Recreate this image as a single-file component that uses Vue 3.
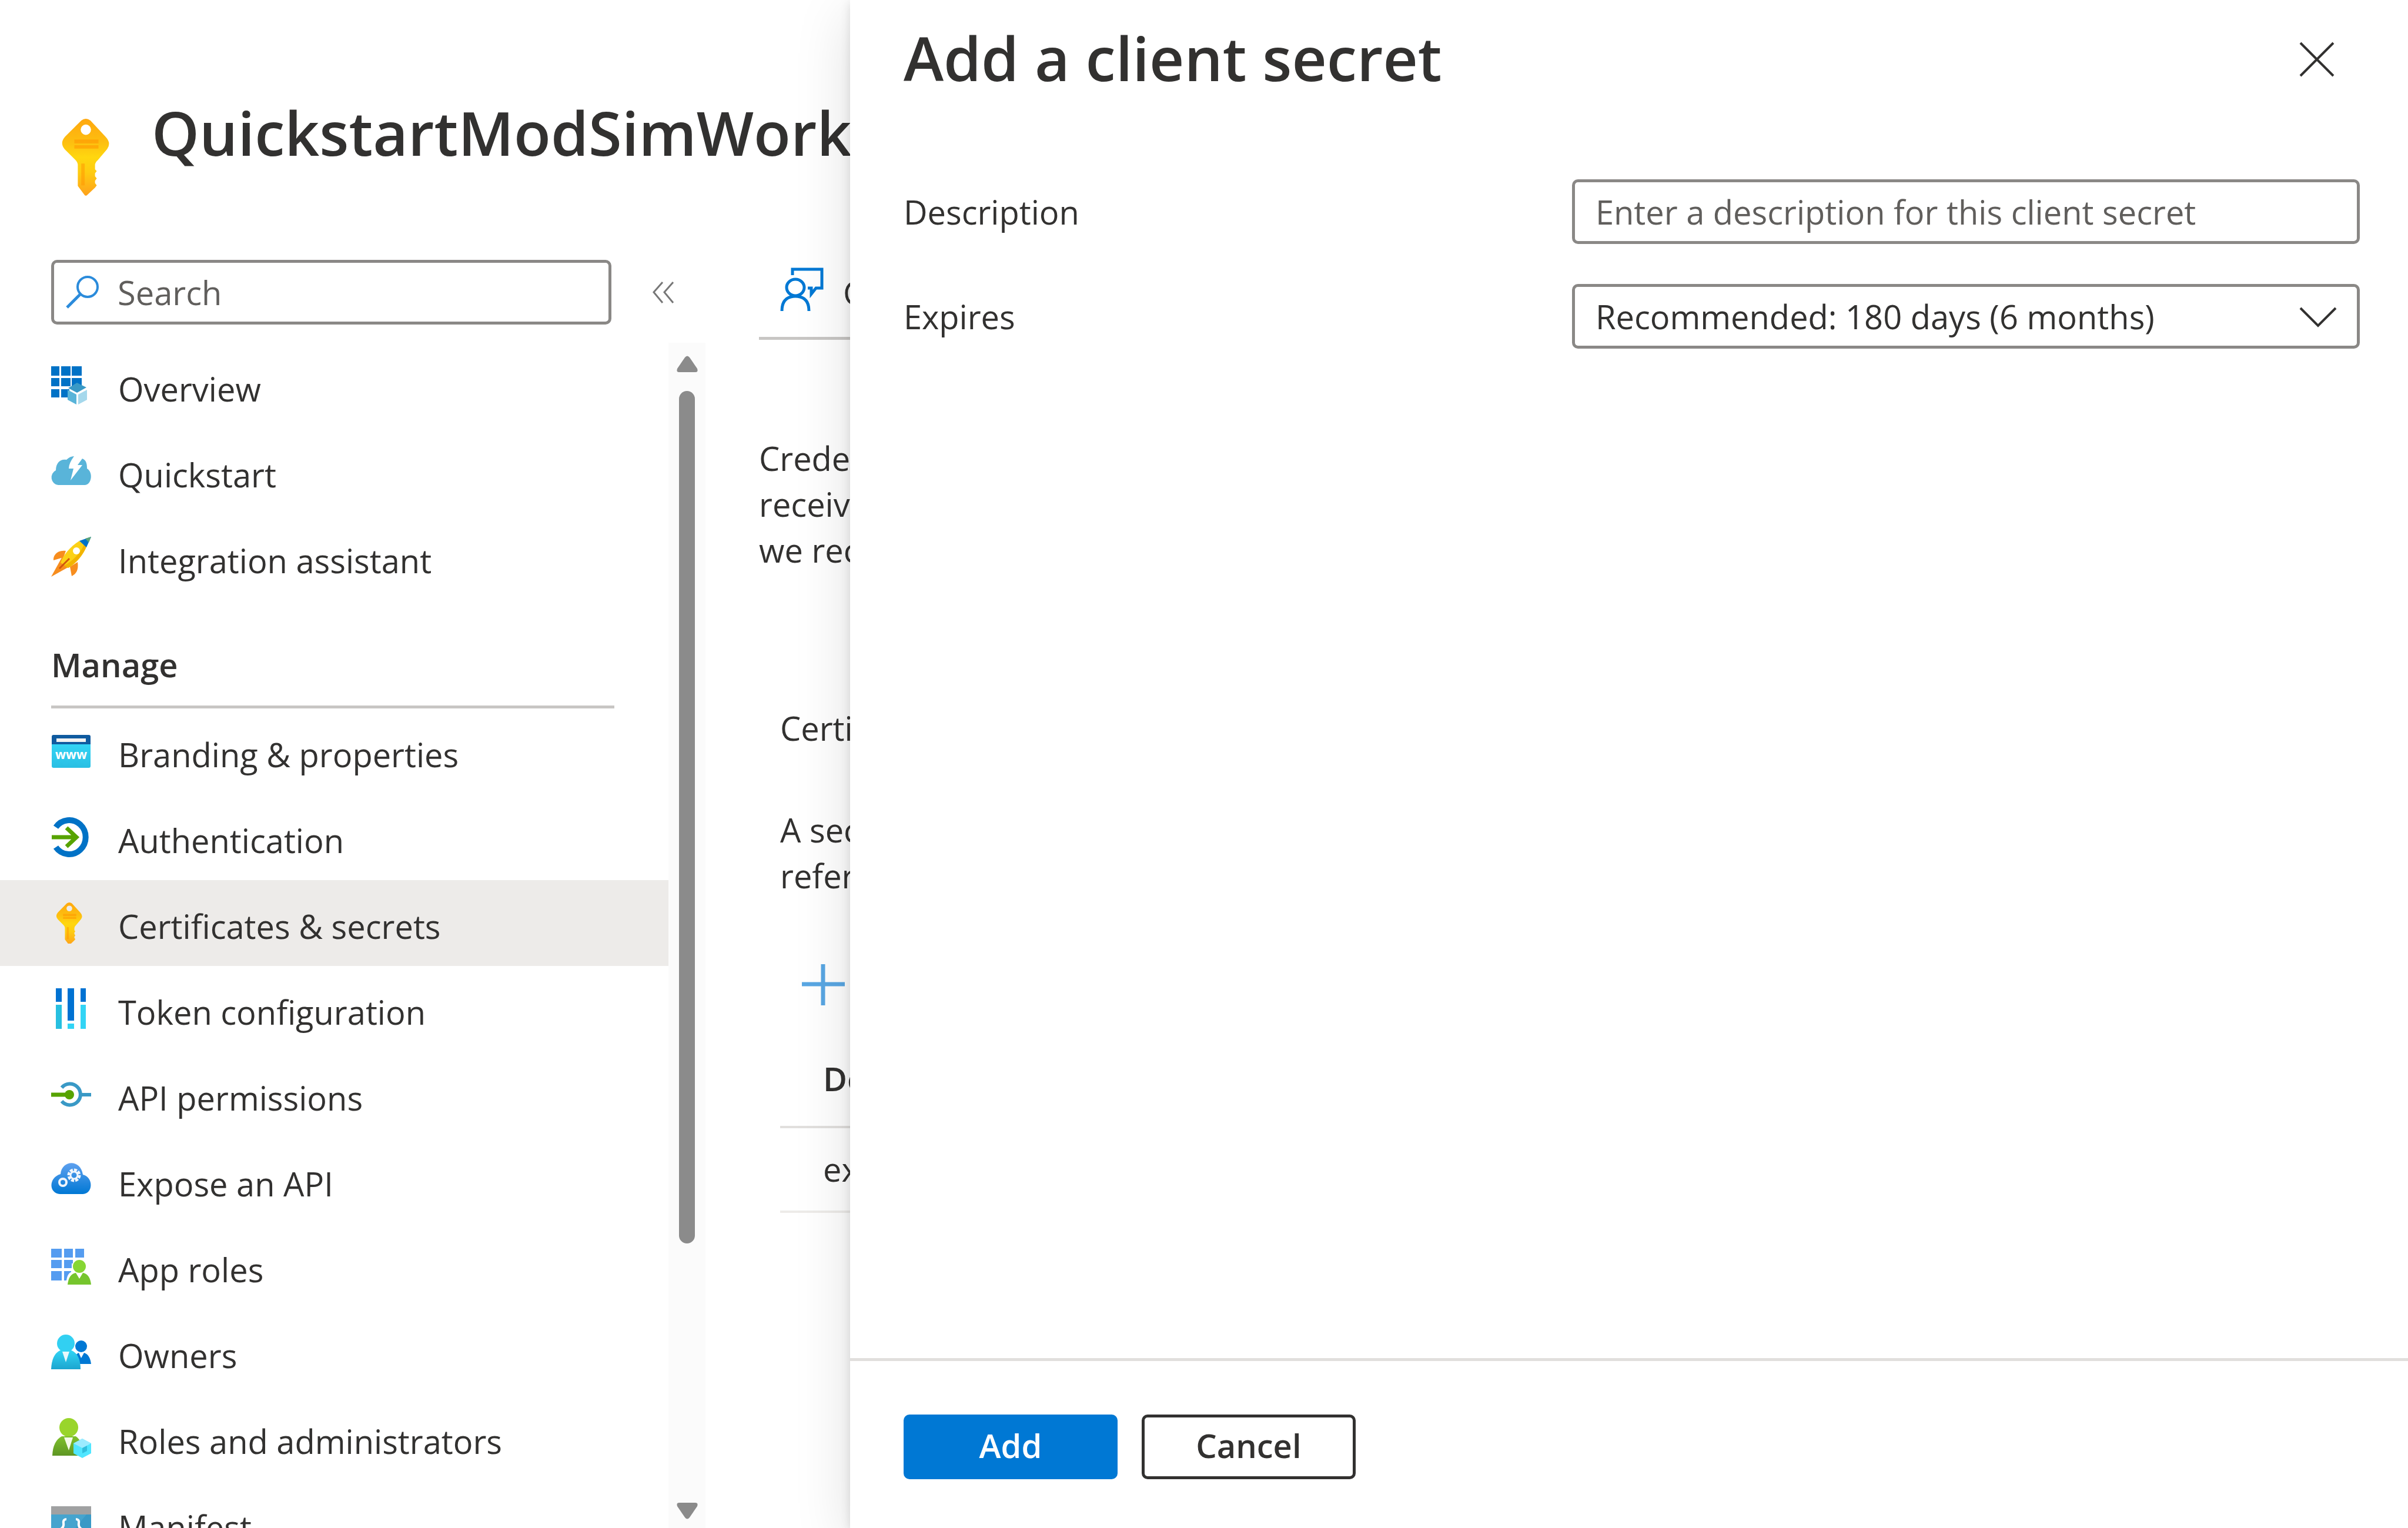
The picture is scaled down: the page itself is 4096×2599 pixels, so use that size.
<script setup>
import { ref } from 'vue'

const keyShape = `
  <defs>
    <linearGradient id="keyFill" x1="0" y1="0" x2="0" y2="1">
      <stop offset="0" stop-color="#ffa80f"/><stop offset=".3" stop-color="#fdbe10"/>
      <stop offset=".5" stop-color="#ffd70f"/><stop offset=".7" stop-color="#fecb11"/>
      <stop offset="1" stop-color="#fea11b"/>
    </linearGradient>
  </defs>
  <path fill="url(#keyFill)" fill-rule="evenodd" d="M33 3q8-6 16 0L75 31q11 11 3 22L62 72q-5 4-5 9v7l3 3-3 4v5l3 4-3 4v4l3 4-3 4-14 13q-2 2-4 0L27 117V81q0-5-4-9L4 53Q-5 42 5 31zM41 10a9 9 0 1 0 0 18 9 9 0 1 0 0-18z"/>
  <path fill="#ff9300" opacity=".55" d="M21 36h42v7H21zM21 46h42v6H21z"/>
  <path fill="#ff9300" opacity=".5" d="M33 78h6v38h-6z"/>`

const icons = {
  overview: `
    <path fill="#0072c6" d="M0 2h14v16H0zM17 2h16v16H17zM35 2h17v16H35zM0 22h14v14H0zM17 22h16v14H17zM35 22h17v14H35zM0 41h14v14H0zM17 41h14v14H17z"/>
    <path fill="#3999c6" d="M44 30 60 38 44 47 29 39z"/>
    <path fill="#59b4d9" d="M28 42 43 50v17L28 59z"/>
    <path fill="#a5d8ec" d="M46 50 61 42v17L46 67z"/>`,
  quickstart: `
    <path fill="#59b4d9" d="M12 58a12 13 0 0 1-4-25c0-13 8-20 18-18q6-6 13-6-9 12-9 21h8l-5 20 20-26h-8l8-11c7 3 8 9 8 17 11 6 8 28-4 28z"/>`,
  rocket: `
    <path fill="#f78d1e" d="M25 24C10 22 3 32 4 40l17-5zM45 43c2 13-2 20-10 24l-3-16z"/>
    <path fill="#f78d1e" d="M20 32 0 68l34-19z"/>
    <path fill="#fcd116" d="M48 7C32 17 20 32 16 44l13 9C43 45 54 31 60 17z"/>
    <path fill="#f2b400" d="M56 13C50 28 36 42 22 49l7 4C43 45 54 31 60 17z"/>
    <path fill="#0072c6" d="M68 0 48 7l12 11z"/><path fill="#59a37a" d="M68 0 58 3l6 7z"/>
    <ellipse cx="43" cy="24" rx="6" ry="6" fill="#fff"/>
    <path stroke="#d0560c" stroke-width="3" d="M31 37 14 54"/>`,
  branding: `
    <defs><linearGradient id="brandFill" x1="0" y1="0" x2="0" y2="1"><stop offset="0" stop-color="#32d4f5"/><stop offset="1" stop-color="#29bfe3"/></linearGradient></defs>
    <path fill="url(#brandFill)" d="M1 22h66v38q0 3-3 3H4q-3 0-3-3z"/>
    <path fill="#0f5a9f" d="M4 7h60q3 0 3 3v13H1V10q0-3 3-3z"/>
    <path fill="#f2f2f2" d="M9 13h50v6H9z"/>
    <text x="34" y="48" text-anchor="middle" font-family="Open Sans, sans-serif" font-weight="700" font-size="21" fill="#fff">www</text>`,
  authentication: `
    <path fill="none" stroke="#0072c6" stroke-width="10" d="M8 18a28 29 0 1 1 0 34"/>
    <path fill="none" stroke="#57a300" stroke-width="7" d="M1 35h42M26 19l17 16-17 16"/>`,
  key: `<svg x="9" width="45" height="70" viewBox="0 0 84 130" preserveAspectRatio="none">${keyShape}</svg>`,
  token: `
    <path fill="#0072d2" d="M8 0h10v23H8zM28 0h11v55H28zM50 0h9v23h-9z"/>
    <path fill="#32d4f5" d="M50 28h9v41h-9zM28 60h11v9H28z"/><path fill="#27bfe0" d="M8 28h10v41H8z"/>`,
  permissions: `
    <path fill="none" stroke="#3999c6" stroke-width="6" d="M18 23a18 18 0 1 1 0 23M50 35h18"/>
    <path stroke="#57a300" stroke-width="7" d="M0 35h30"/><circle cx="31" cy="35" r="8" fill="#57a300"/>`,
  expose: `
    <defs><linearGradient id="cloudFill" x1="0" y1="0" x2="0" y2="1"><stop offset="0" stop-color="#5ea0ef"/><stop offset="1" stop-color="#0078d4"/></linearGradient></defs>
    <path fill="url(#cloudFill)" d="M15 58C-4 57-5 30 16 24 18 0 50-2 54 25c18 4 18 32 0 33z"/>
    <circle cx="39" cy="26" r="9" fill="none" stroke="#f0f5fb" stroke-width="5" stroke-dasharray="5 2"/>
    <circle cx="39" cy="26" r="6" fill="none" stroke="#f0f5fb" stroke-width="3"/>
    <circle cx="20" cy="38" r="6" fill="none" stroke="#f0f5fb" stroke-width="4"/>`,
  roles: `
    <path fill="#559cf0" d="M0 5h18v15H0zM22 5h15v15H22zM41 5h15v15H41zM0 24h18v14H0zM22 24h15v14H22zM0 43h18v16H0zM22 43h12v16H22z"/>
    <path fill="#fff" d="M35 30h20v16H35zM26 59q2-15 12-15l-4 20h-8z"/>
    <circle cx="48" cy="35" r="11" fill="#86d633"/>
    <path fill="#76c52d" d="M28 66q2-18 14-20l6 10 6-10q12 2 14 20z"/>`,
  owners: `
    <circle cx="51" cy="25" r="10" fill="#0078d4"/><path fill="#0078d4" d="M38 55q2-17 9-19l4 9 5-9q10 3 12 19z"/>
    <defs><linearGradient id="ownerFill" x1="0" y1="0" x2="0" y2="1"><stop offset="0" stop-color="#32d4f5"/><stop offset="1" stop-color="#1ba5cf"/></linearGradient></defs>
    <circle cx="25" cy="20" r="15" fill="#32d0f2"/>
    <path fill="url(#ownerFill)" d="M0 64q1-25 15-32h20q15 7 15 32z"/><path fill="#e9f8fc" d="M19 34h12l-6 18z"/>`,
  admins: `
    <defs><linearGradient id="adminFill" x1="0" y1="0" x2="0" y2="1"><stop offset="0" stop-color="#7fc12c"/><stop offset="1" stop-color="#5e9624"/></linearGradient></defs>
    <circle cx="30" cy="17" r="16" fill="#99d52b"/>
    <path fill="url(#adminFill)" d="M2 65Q3 40 18 32h24q12 8 13 33z"/><path fill="#f4fae9" d="M22 34h15l-7 22z"/>
    <path fill="#50e6ff" d="M53 36 68 44v17L53 69 38 61V44z"/><path fill="#9cebff" d="M53 36 68 44 53 52 38 44z"/><path fill="#32bedd" d="m53 52 8-4v9l-8 4z"/>`,
  manifest: `
    <path fill="#a0a1a2" d="M0 5h68v14H0z"/><path fill="#3999c6" d="M0 19h68v49H0z"/><path fill="#59b4d9" opacity=".4" d="M0 19h60L20 68H0z"/>
    <path fill="none" stroke="#fff" stroke-width="4" d="M26 27q-6 0-5 7t-5 10q6 2 5 10t5 8M42 27q6 0 5 7t5 10q-6 2-5 10t-5 8"/>`
}

const topItems = [
  { label: 'Overview', icon: 'overview' },
  { label: 'Quickstart', icon: 'quickstart' },
  { label: 'Integration assistant', icon: 'rocket' }
]
const manageItems = [
  { label: 'Branding & properties', icon: 'branding' },
  { label: 'Authentication', icon: 'authentication' },
  { label: 'Certificates & secrets', icon: 'key', active: true },
  { label: 'Token configuration', icon: 'token' },
  { label: 'API permissions', icon: 'permissions' },
  { label: 'Expose an API', icon: 'expose' },
  { label: 'App roles', icon: 'roles' },
  { label: 'Owners', icon: 'owners' },
  { label: 'Roles and administrators', icon: 'admins' },
  { label: 'Manifest', icon: 'manifest' }
]

const description = ref('')
const expires = ref('180')
</script>

<template>
  <div class="portal">
    <div class="blade">
      <header class="blade-header">
        <svg class="blade-key" viewBox="0 0 84 130" aria-hidden="true" v-html="keyShape"></svg>
        <h1 class="blade-title">QuickstartModSimWorkbench</h1>
      </header>

      <div class="blade-body">
        <aside class="sidebar">
          <div class="search-row">
            <label class="search">
              <svg class="search-icon" viewBox="0 0 56 56" aria-hidden="true">
                <circle cx="37" cy="19" r="17" fill="none" stroke="#2b8bdb" stroke-width="4" />
                <path d="M25 31 2 54" stroke="#2b8bdb" stroke-width="5" />
              </svg>
              <input type="search" placeholder="Search" aria-label="Search" />
            </label>
            <button class="collapse" type="button" aria-label="Collapse menu">
              <svg viewBox="0 0 37 37" aria-hidden="true">
                <path d="M17 1 2 18l15 18M35 1 20 18l15 18" fill="none" stroke="#777" stroke-width="3" />
              </svg>
            </button>
          </div>

          <div class="menu">
            <nav class="menu-scroll">
              <ul>
                <li v-for="item in topItems" :key="item.label">
                  <a href="#" class="menu-item">
                    <svg class="menu-icon" viewBox="0 0 68 70" aria-hidden="true" v-html="icons[item.icon]"></svg>
                    <span>{{ item.label }}</span>
                  </a>
                </li>
              </ul>
              <h2 class="menu-heading">Manage</h2>
              <ul>
                <li v-for="item in manageItems" :key="item.label">
                  <a href="#" class="menu-item" :class="{ active: item.active }">
                    <svg class="menu-icon" viewBox="0 0 68 70" aria-hidden="true" v-html="icons[item.icon]"></svg>
                    <span>{{ item.label }}</span>
                  </a>
                </li>
              </ul>
            </nav>
            <div class="scrollbar" aria-hidden="true">
              <svg viewBox="0 0 38 28"><path d="M15 3q4-5 8 0l13 19q2 6-3 6H5q-5 0-3-6z" fill="#8b8b8b" /></svg>
              <div class="track"><div class="thumb"></div></div>
              <svg viewBox="0 0 38 28"><path d="M15 25q4 5 8 0L36 6q2-6-3-6H5Q0 0 2 6z" fill="#8b8b8b" /></svg>
            </div>
          </div>
        </aside>

        <main class="content">
          <div class="toolbar">
            <button class="feedback" type="button">
              <svg viewBox="0 0 74 74" aria-hidden="true" fill="none" stroke="#0078d4" stroke-width="5">
                <path d="M21 13V3h50v32H61L53 45V35h-6" />
                <ellipse cx="26" cy="34" rx="15" ry="14" />
                <path d="M3 74q0-25 23-25t23 25" />
              </svg>
              <span>Got feedback?</span>
            </button>
          </div>
          <p class="intro">
            Credentials enable confidential applications to identify themselves<br />
            receiving tokens at a web addressable location. For a higher level<br />
            we recommend using a certificate as a credential.
          </p>
          <section class="secrets">
            <a href="#" class="tab">Certificates (0)</a>
            <p class="secret-note">
              A secret string that the application uses to prove its identity<br />
              referred to as application password.
            </p>
            <button class="new-secret" type="button" aria-label="New client secret">
              <svg viewBox="0 0 73 73" aria-hidden="true">
                <path d="M0 36h73M36 2v70" stroke="#0078d4" stroke-opacity=".65" stroke-width="7" />
              </svg>
            </button>
            <table>
              <thead>
                <tr><th scope="col">Description</th></tr>
              </thead>
              <tbody>
                <tr><td>example</td></tr>
              </tbody>
            </table>
          </section>
        </main>
      </div>
    </div>

    <section class="panel" aria-labelledby="panel-title">
      <header class="panel-header">
        <h2 id="panel-title">Add a client secret</h2>
        <button class="close" type="button" aria-label="Close">
          <svg viewBox="0 0 58 58" aria-hidden="true">
            <path d="M1 1 57 57M57 1 1 57" stroke="#323130" stroke-width="4" />
          </svg>
        </button>
      </header>

      <form class="form" @submit.prevent>
        <div class="field">
          <label for="description">Description</label>
          <input id="description" v-model="description" type="text" placeholder="Enter a description for this client secret" />
        </div>
        <div class="field">
          <label for="expires">Expires</label>
          <div class="select-wrap">
            <select id="expires" v-model="expires">
              <option value="180">Recommended: 180 days (6 months)</option>
            </select>
            <svg class="chevron" viewBox="0 0 62 34" aria-hidden="true">
              <path d="M1 1 31 31 61 1" fill="none" stroke="#323130" stroke-width="4" />
            </svg>
          </div>
        </div>
      </form>

      <footer class="panel-footer">
        <button class="btn primary" type="button">Add</button>
        <button class="btn" type="button">Cancel</button>
      </footer>
    </section>
  </div>
</template>

<style>
body {
  margin: 0;
  background: #fff;
}
</style>

<style scoped>
.portal {
  display: flex;
  height: 100vh;
  overflow: hidden;
  color: #323130;
  font: 56px/78px 'Open Sans', 'Noto Sans', sans-serif;
}
.portal * {
  box-sizing: border-box;
}
h1, h2, p, ul {
  margin: 0;
  padding: 0;
}
ul {
  list-style: none;
}
svg {
  display: block;
  flex: none;
  overflow: visible;
}
button, input, select {
  margin: 0;
  color: inherit;
  font: inherit;
}
button {
  padding: 0;
  border: 0;
  background: none;
}
a {
  color: inherit;
  text-decoration: none;
}

.blade {
  display: flex;
  flex: 0 0 35.3%;
  flex-direction: column;
  min-width: 0;
  overflow: hidden;
  white-space: nowrap;
}
.blade-header {
  display: flex;
  flex: none;
  gap: 70px;
  height: 442px;
  padding: 165px 0 0 106px;
}
.blade-key {
  width: 82px;
  height: 129px;
  margin-top: 36px;
}
.blade-title, .panel-header h2 {
  font-size: 103px;
  font-weight: 600;
  line-height: 120px;
}
.blade-body {
  display: flex;
  flex: 1;
  min-height: 0;
}

.sidebar {
  display: flex;
  flex: 0 0 1200px;
  flex-direction: column;
}
.search-row {
  display: flex;
  flex: none;
  gap: 70px;
  height: 141px;
  padding-left: 87px;
}
.search {
  display: flex;
  align-items: center;
  gap: 32px;
  width: 953px;
  height: 110px;
  padding: 0 20px;
  border: 5px solid #8a8886;
  border-radius: 10px;
}
.search-icon {
  width: 56px;
  height: 56px;
}
.search input {
  flex: 1;
  min-width: 0;
  padding: 0;
  border: 0;
  outline: 0;
  background: none;
  appearance: none;
}
input::placeholder {
  color: #605e5c;
  opacity: 1;
}
.collapse {
  height: 110px;
}
.collapse svg {
  width: 37px;
  height: 37px;
}
.menu {
  display: flex;
  flex: 1;
  min-height: 0;
}
.menu-scroll {
  flex: 1;
  overflow: hidden;
}
.menu-item {
  display: flex;
  align-items: center;
  gap: 46px;
  height: 146px;
  padding-left: 87px;
}
.menu-item.active {
  background: #edebe9;
}
.menu-item span {
  padding-top: 10px;
}
.menu-icon {
  width: 68px;
  height: 70px;
}
.menu-heading {
  height: 184px;
  margin: 0 92px 0 87px;
  padding-top: 70px;
  border-bottom: 5px solid #c8c6c4;
  font-size: 56px;
  font-weight: 600;
}
.scrollbar {
  display: flex;
  flex-direction: column;
  align-items: center;
  gap: 32px;
  width: 63px;
  padding: 22px 0 15px;
  background: #fbfbfb;
}
.scrollbar svg {
  width: 38px;
  height: 28px;
}
.track {
  flex: 1;
  width: 27px;
}
.thumb {
  height: 78%;
  border-radius: 14px;
  background: #8b8b8b;
}

.content {
  flex: 1;
  min-width: 0;
  padding-left: 91px;
}
.toolbar {
  height: 136px;
  padding-left: 36px;
  border-bottom: 5px solid #c8c6c4;
}
.feedback {
  display: flex;
  align-items: center;
  gap: 33px;
  height: 99px;
}
.feedback svg {
  width: 74px;
  height: 74px;
}
.feedback span {
  padding-top: 10px;
}
.intro {
  padding-top: 162px;
}
.secrets {
  padding: 225px 0 0 36px;
}
.tab {
  display: block;
}
.secret-note {
  margin-top: 95px;
}
.new-secret {
  display: block;
  margin: 110px 0 0 37px;
}
.new-secret svg {
  width: 73px;
  height: 73px;
}
table {
  width: 100%;
  border-collapse: collapse;
}
th, td {
  padding: 30px 0 32px 73px;
  border-bottom: 4px solid #edebe9;
  text-align: left;
}
th {
  padding: 84px 0 42px 73px;
  border-color: #e1dfdd;
  font-weight: 600;
}

.panel {
  display: flex;
  z-index: 1;
  flex: 1;
  flex-direction: column;
  min-width: 0;
  background: #fff;
  box-shadow: 0 24px 90px rgba(0, 0, 0, 0.13), 0 4px 16px rgba(0, 0, 0, 0.12);
}
.panel-header {
  display: flex;
  align-items: center;
  justify-content: space-between;
  padding: 38px 126px 0 91px;
}
.close {
  padding-top: 6px;
}
.close svg {
  width: 58px;
  height: 58px;
}
.form {
  display: flex;
  flex: 1;
  flex-direction: column;
  gap: 68px;
  padding: 147px 82px 0 91px;
}
.field {
  display: flex;
  align-items: center;
}
.field label {
  flex: 0 0 1137px;
}
.field > input, .select-wrap {
  position: relative;
  flex: 1;
  min-width: 0;
}
.field input, .field select {
  width: 100%;
  height: 110px;
  padding: 0 35px;
  border: 5px solid #8a8886;
  border-radius: 10px;
  outline: 0;
  background: #fff;
}
.field select {
  display: block;
  appearance: none;
}
.chevron {
  position: absolute;
  top: 40px;
  right: 40px;
  width: 62px;
  height: 34px;
  pointer-events: none;
}
.panel-footer {
  display: flex;
  gap: 41px;
  padding: 91px 91px 83px;
  border-top: 5px solid #e1dfdd;
}
.btn {
  width: 364px;
  height: 110px;
  padding-bottom: 6px;
  border: 5px solid #323130;
  border-radius: 10px;
  font-weight: 600;
}
.btn.primary {
  border-color: #0078d4;
  background: #0078d4;
  color: #fff;
}
</style>
